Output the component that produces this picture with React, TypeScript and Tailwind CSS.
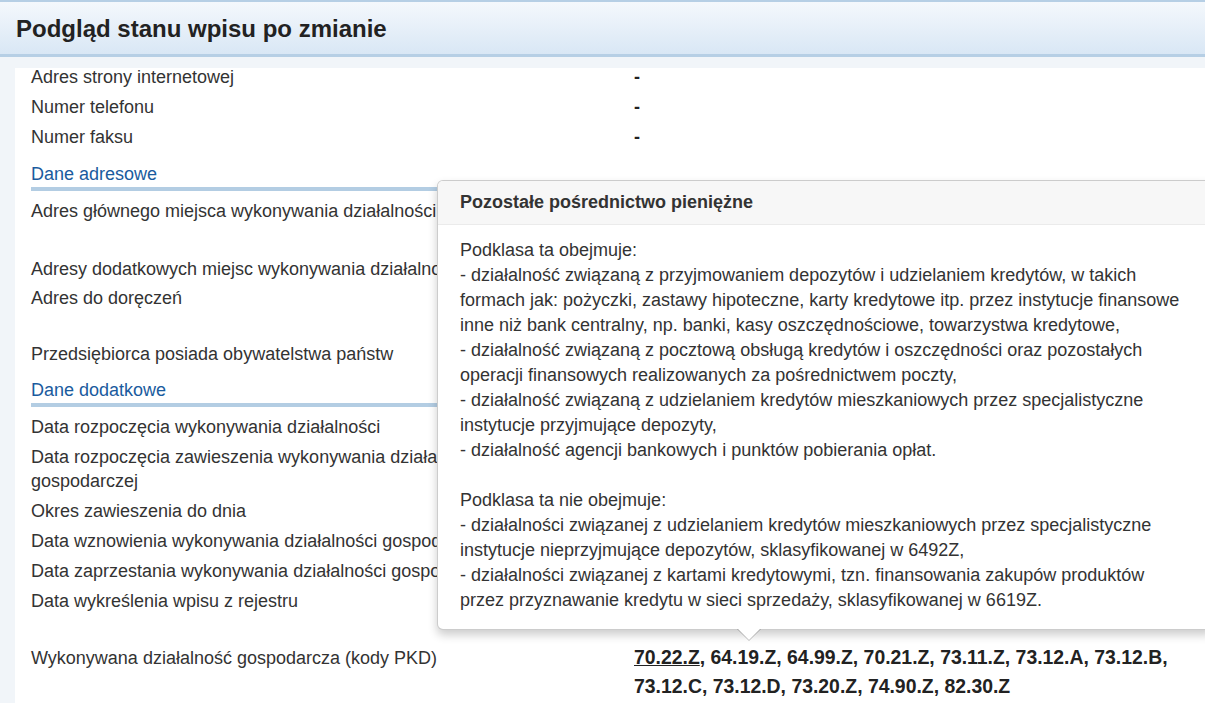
import React from "react";

const font = { fontFamily: '"Liberation Sans", Arial, sans-serif' };

function Row({ label, value, h }: { label: React.ReactNode; value?: React.ReactNode; h?: string }) {
  return (
    <div className={`flex py-[3px] leading-[24px] ${h ?? ""}`}>
      <div className="w-[603px] shrink-0 pr-[83px] text-[#333]">{label}</div>
      <div className="text-[#222] font-bold">{value}</div>
    </div>
  );
}

function Heading({ children, mt }: { children: React.ReactNode; mt: string }) {
  return (
    <div className={`${mt} mb-[4.5px] mr-[16px]`}>
      <div className="leading-[25px] text-[#1a5b9e]">{children}</div>
      <div className="h-[4px] bg-[#b3cde3]" />
    </div>
  );
}

const popLines = [
  "Podklasa ta obejmuje:",
  "- działalność związaną z przyjmowaniem depozytów i udzielaniem kredytów, w takich",
  "formach jak: pożyczki, zastawy hipoteczne, karty kredytowe itp. przez instytucje finansowe",
  "inne niż bank centralny, np. banki, kasy oszczędnościowe, towarzystwa kredytowe,",
  "- działalność związaną z pocztową obsługą kredytów i oszczędności oraz pozostałych",
  "operacji finansowych realizowanych za pośrednictwem poczty,",
  "- działalność związaną z udzielaniem kredytów mieszkaniowych przez specjalistyczne",
  "instytucje przyjmujące depozyty,",
  "- działalność agencji bankowych i punktów pobierania opłat.",
  "",
  "Podklasa ta nie obejmuje:",
  "- działalności związanej z udzielaniem kredytów mieszkaniowych przez specjalistyczne",
  "instytucje nieprzyjmujące depozytów, sklasyfikowanej w 6492Z,",
  "- działalności związanej z kartami kredytowymi, tzn. finansowania zakupów produktów",
  "przez przyznawanie kredytu w sieci sprzedaży, sklasyfikowanej w 6619Z.",
];

export default function App() {
  return (
    <div className="relative w-[1205px] h-[703px] overflow-hidden bg-[#f1f5f9] text-[18px]" style={font}>
      <div className="h-[57px] border-t-[2px] border-b-[3px] border-[#b6cfe5] bg-gradient-to-b from-[#f4f8fc] to-[#d9e7f5] px-[16px] flex items-center">
        <h1 className="text-[24px] font-bold text-[#222] leading-[30px] pt-[2px]">Podgląd stanu wpisu po zmianie</h1>
      </div>
      <div className="mt-[11px] ml-[15px] bg-white h-[700px] overflow-hidden pl-[16px]">
        <div className="-mt-[6px]">
          <Row label="Adres strony internetowej" value="-" />
          <Row label="Numer telefonu" value="-" />
          <Row label="Numer faksu" value="-" />
          <Heading mt="mt-[10px]">Dane adresowe</Heading>
          <Row label="Adres głównego miejsca wykonywania działalności" h="h-[58px]" />
          <Row label="Adresy dodatkowych miejsc wykonywania działalności" h="h-[29px]" />
          <Row label="Adres do doręczeń" h="h-[56px]" />
          <Row label="Przedsiębiorca posiada obywatelstwa państw" />
          <Heading mt="mt-[9.5px]">Dane dodatkowe</Heading>
          <Row label="Data rozpoczęcia wykonywania działalności" />
          <Row label="Data rozpoczęcia zawieszenia wykonywania działalności gospodarczej" />
          <Row label="Okres zawieszenia do dnia" />
          <Row label="Data wznowienia wykonywania działalności gospodarczej" />
          <Row label="Data zaprzestania wykonywania działalności gospodarczej" />
          <Row label="Data wykreślenia wpisu z rejestru" h="h-[57px]" />
          <div className="flex">
            <div className="w-[603px] shrink-0 pr-[83px] text-[#333] py-[3px] leading-[24px]">
              Wykonywana działalność gospodarcza (kody PKD)
            </div>
            <div className="font-bold text-[#222] text-[19.4px] leading-[29px] w-[545px]">
              <span className="underline">70.22.Z</span>, 64.19.Z, 64.99.Z, 70.21.Z, 73.11.Z, 73.12.A, 73.12.B, 73.12.C, 73.12.D, 73.20.Z, 74.90.Z, 82.30.Z
            </div>
          </div>
        </div>
      </div>

      <div className="absolute left-[437px] top-[180px] w-[776px] rounded-[6px] border border-[rgba(0,0,0,0.2)] bg-white shadow-[0_5px_10px_rgba(0,0,0,0.2)]">
        <div className="rounded-t-[5px] bg-[#f7f7f7] border-b border-[#ebebeb] px-[22px] py-[9px] leading-[25px] font-bold text-[#333]">
          Pozostałe pośrednictwo pieniężne
        </div>
        <div className="px-[22px] pt-[12.5px] pb-[16px] leading-[25px] text-[#333] whitespace-nowrap">
          {popLines.map((l, i) => (
            <div key={i} className="h-[25px]">{l}</div>
          ))}
        </div>
        <div className="absolute left-[299px] -bottom-[12px] w-0 h-0 border-l-[12px] border-r-[12px] border-t-[12px] border-l-transparent border-r-transparent border-t-[rgba(0,0,0,0.25)]" />
        <div className="absolute left-[300px] -bottom-[11px] w-0 h-0 border-l-[11px] border-r-[11px] border-t-[11px] border-l-transparent border-r-transparent border-t-white" />
      </div>
    </div>
  );
}
